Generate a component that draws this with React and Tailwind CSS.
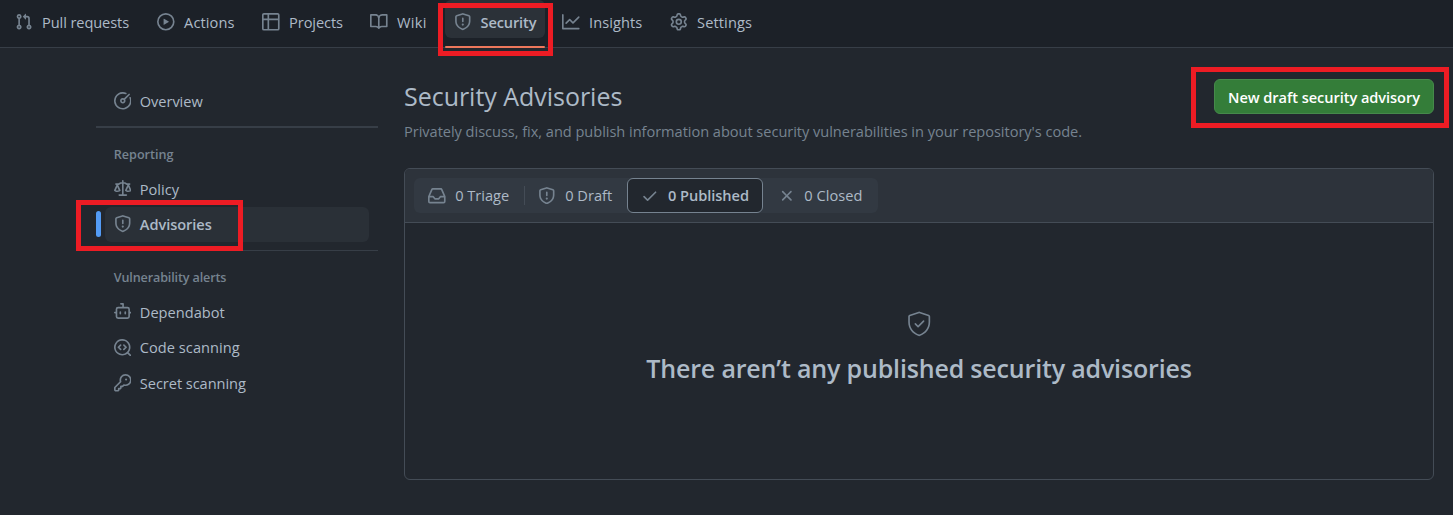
const ICONS = {
  pullRequest: "M1.5 3.25a2.25 2.25 0 1 1 3 2.122v5.256a2.251 2.251 0 1 1-1.5 0V5.372A2.25 2.25 0 0 1 1.5 3.25Zm5.677-.177L9.573.677A.25.25 0 0 1 10 .854V2.5h1A2.5 2.5 0 0 1 13.5 5v5.628a2.251 2.251 0 1 1-1.5 0V5a1 1 0 0 0-1-1h-1v1.646a.25.25 0 0 1-.427.177L7.177 3.427a.25.25 0 0 1 0-.354ZM3.75 2.5a.75.75 0 1 0 0 1.5.75.75 0 0 0 0-1.5Zm0 9.5a.75.75 0 1 0 0 1.5.75.75 0 0 0 0-1.5Zm8.25.75a.75.75 0 1 0 1.5 0 .75.75 0 0 0-1.5 0Z",
  play: "M8 0a8 8 0 1 1 0 16A8 8 0 0 1 8 0ZM1.5 8a6.5 6.5 0 1 0 13 0 6.5 6.5 0 0 0-13 0Zm4.879-2.773 4.264 2.559a.25.25 0 0 1 0 .428l-4.264 2.559A.25.25 0 0 1 6 10.559V5.442a.25.25 0 0 1 .379-.215Z",
  table: "M0 1.75C0 .784.784 0 1.75 0h12.5C15.216 0 16 .784 16 1.75v12.5A1.75 1.75 0 0 1 14.25 16H1.75A1.75 1.75 0 0 1 0 14.25ZM6.5 6.5v8h7.75a.25.25 0 0 0 .25-.25V6.5Zm8-1.5V1.75a.25.25 0 0 0-.25-.25H6.5V5Zm-13 1.5v7.75c0 .138.112.25.25.25H5v-8ZM5 5V1.5H1.75a.25.25 0 0 0-.25.25V5Z",
  book: "M0 1.75A.75.75 0 0 1 .75 1h4.253c1.227 0 2.317.59 3 1.501A3.743 3.743 0 0 1 11.006 1h4.245a.75.75 0 0 1 .75.75v10.5a.75.75 0 0 1-.75.75h-4.507a2.25 2.25 0 0 0-1.591.659l-.622.621a.75.75 0 0 1-1.06 0l-.622-.621A2.25 2.25 0 0 0 5.258 13H.75a.75.75 0 0 1-.75-.75Zm7.251 10.324.004-5.073-.002-2.253A2.25 2.25 0 0 0 5.003 2.5H1.5v9h3.757a3.75 3.75 0 0 1 1.994.574ZM8.755 4.75l-.004 7.322a3.752 3.752 0 0 1 1.992-.572H14.5v-9h-3.495a2.25 2.25 0 0 0-2.25 2.25Z",
  shield: "M7.467.133a1.748 1.748 0 0 1 1.066 0l5.25 1.68A1.75 1.75 0 0 1 15 3.48V7c0 1.566-.32 3.182-1.303 4.682-.983 1.498-2.585 2.813-5.032 3.855a1.697 1.697 0 0 1-1.33 0c-2.447-1.042-4.049-2.357-5.032-3.855C1.32 10.182 1 8.566 1 7V3.48a1.75 1.75 0 0 1 1.217-1.667Zm.61 1.429a.25.25 0 0 0-.153 0l-5.25 1.68a.25.25 0 0 0-.174.238V7c0 1.358.275 2.666 1.057 3.86.784 1.194 2.121 2.34 4.366 3.297a.196.196 0 0 0 .154 0c2.245-.956 3.582-2.104 4.366-3.298C13.225 9.666 13.5 8.36 13.5 7V3.48a.251.251 0 0 0-.174-.237l-5.25-1.68ZM8.75 4.75v3a.75.75 0 0 1-1.5 0v-3a.75.75 0 0 1 1.5 0ZM9 10.5a1 1 0 1 1-2 0 1 1 0 0 1 2 0Z",
  graph: "M1.5 1.75V13.5h13.75a.75.75 0 0 1 0 1.5H.75a.75.75 0 0 1-.75-.75V1.75a.75.75 0 0 1 1.5 0Zm14.28 2.53-5.25 5.25a.75.75 0 0 1-1.06 0L7 7.06 4.28 9.78a.751.751 0 0 1-1.042-.018.751.751 0 0 1-.018-1.042l3.25-3.25a.75.75 0 0 1 1.06 0L10 7.94l4.72-4.72a.751.751 0 0 1 1.042.018.751.751 0 0 1 .018 1.042Z",
  gear: "M8 0a8.2 8.2 0 0 1 .701.031C9.444.095 9.99.645 10.16 1.29l.288 1.107c.018.066.079.158.212.224.231.114.454.243.668.386.123.082.233.09.299.071l1.103-.303c.644-.176 1.392.021 1.82.63.27.385.506.792.704 1.218.315.675.111 1.422-.364 1.891l-.814.806c-.049.048-.098.147-.088.294.016.257.016.515 0 .772-.01.147.038.246.088.294l.814.806c.475.469.679 1.216.364 1.891a7.977 7.977 0 0 1-.704 1.217c-.428.61-1.176.807-1.82.63l-1.102-.302c-.067-.019-.177-.011-.3.071a5.909 5.909 0 0 1-.668.386c-.133.066-.194.158-.211.224l-.29 1.106c-.168.646-.715 1.196-1.458 1.26a8.006 8.006 0 0 1-1.402 0c-.743-.064-1.289-.614-1.458-1.26l-.289-1.106c-.018-.066-.079-.158-.212-.224a5.738 5.738 0 0 1-.668-.386c-.123-.082-.233-.09-.299-.071l-1.103.303c-.644.176-1.392-.021-1.82-.63a8.12 8.12 0 0 1-.704-1.218c-.315-.675-.111-1.422.363-1.891l.815-.806c.05-.048.098-.147.088-.294a6.214 6.214 0 0 1 0-.772c.01-.147-.038-.246-.088-.294l-.815-.806C.635 6.045.431 5.298.746 4.623a7.92 7.92 0 0 1 .704-1.217c.428-.61 1.176-.807 1.82-.63l1.102.302c.067.019.177.011.3-.071.214-.143.437-.272.668-.386.133-.066.194-.158.211-.224l.29-1.106C6.009.645 6.556.095 7.299.03 7.53.01 7.764 0 8 0Zm-.571 1.525c-.036.003-.108.036-.137.146l-.289 1.105c-.147.561-.549.967-.998 1.189-.173.086-.34.183-.5.29-.417.278-.97.423-1.529.27l-1.103-.303c-.109-.03-.175.016-.195.045-.22.312-.412.644-.573.99-.014.031-.021.11.059.19l.815.806c.411.406.562.957.53 1.456a4.709 4.709 0 0 0 0 .582c.032.499-.119 1.05-.53 1.456l-.815.806c-.081.08-.073.159-.059.19.162.346.353.677.573.989.02.03.085.076.195.046l1.102-.303c.56-.153 1.113-.008 1.53.27.161.107.328.204.501.29.447.222.85.629.997 1.189l.289 1.105c.029.109.101.143.137.146a6.6 6.6 0 0 0 1.142 0c.036-.003.108-.036.137-.146l.289-1.105c.147-.561.549-.967.998-1.189.173-.086.34-.183.5-.29.417-.278.97-.423 1.529-.27l1.103.303c.109.029.175-.016.195-.045.22-.313.411-.644.573-.99.014-.031.021-.11-.059-.19l-.815-.806c-.411-.406-.562-.957-.53-1.456a4.709 4.709 0 0 0 0-.582c-.032-.499.119-1.05.53-1.456l.815-.806c.081-.08.073-.159.059-.19a6.464 6.464 0 0 0-.573-.989c-.02-.03-.085-.076-.195-.046l-1.102.303c-.56.153-1.113.008-1.53-.27a4.44 4.44 0 0 0-.501-.29c-.447-.222-.85-.629-.997-1.189l-.289-1.105c-.029-.11-.101-.143-.137-.146a6.6 6.6 0 0 0-1.142 0ZM11 8a3 3 0 1 1-6 0 3 3 0 0 1 6 0ZM9.5 8a1.5 1.5 0 1 0-3.001.001A1.5 1.5 0 0 0 9.5 8Z",
  meter: "M8 1.5a6.5 6.5 0 1 0 6.016 4.035.75.75 0 0 1 1.388-.57 8 8 0 1 1-4.37-4.37.75.75 0 0 1-.569 1.389A6.473 6.473 0 0 0 8 1.5Zm6.28.22a.75.75 0 0 1 0 1.06l-4.063 4.064a2.5 2.5 0 1 1-1.06-1.06L13.22 1.72a.75.75 0 0 1 1.06 0ZM7 8a1 1 0 1 0 2 0 1 1 0 0 0-2 0Z",
  law: "M8.75.75V2h.985c.304 0 .603.08.867.231l1.29.736c.038.022.08.033.124.033h2.234a.75.75 0 0 1 0 1.5h-.427l2.111 4.692a.75.75 0 0 1-.154.838l-.53-.53.529.531-.001.002-.002.002-.006.006-.006.005-.01.01-.045.04c-.21.176-.441.327-.686.45C14.556 10.78 13.88 11 13 11a4.498 4.498 0 0 1-2.023-.454 3.544 3.544 0 0 1-.686-.45l-.045-.04-.016-.015-.006-.006-.004-.004v-.001a.75.75 0 0 1-.154-.838L12.178 4.5h-.162c-.305 0-.604-.079-.868-.231l-1.29-.736a.245.245 0 0 0-.124-.033H8.75V13h2.5a.75.75 0 0 1 0 1.5h-6.5a.75.75 0 0 1 0-1.5h2.5V3.5h-.984a.245.245 0 0 0-.124.033l-1.289.737c-.265.15-.564.23-.869.23h-.162l2.112 4.692a.75.75 0 0 1-.154.838l-.53-.53.529.531-.001.002-.002.002-.006.006-.016.015-.045.04c-.21.176-.441.327-.686.45C4.556 10.78 3.88 11 3 11a4.498 4.498 0 0 1-2.023-.454 3.544 3.544 0 0 1-.686-.45l-.045-.04-.016-.015-.006-.006-.004-.004v-.001a.75.75 0 0 1-.154-.838L2.178 4.5H1.75a.75.75 0 0 1 0-1.5h2.234a.249.249 0 0 0 .125-.033l1.288-.737c.265-.15.564-.23.869-.23h.984V.75a.75.75 0 0 1 1.5 0Zm2.945 8.477c.285.135.718.273 1.305.273s1.02-.138 1.305-.273L13 6.327Zm-10 0c.285.135.718.273 1.305.273s1.02-.138 1.305-.273L3 6.327Z",
  dependabot: "M5.75 7.5a.75.75 0 0 1 .75.75v1.5a.75.75 0 0 1-1.5 0v-1.5a.75.75 0 0 1 .75-.75Zm5.25.75a.75.75 0 0 0-1.5 0v1.5a.75.75 0 0 0 1.5 0v-1.5ZM6.25 0h2A.75.75 0 0 1 9 .75V3.5h3.25a2.25 2.25 0 0 1 2.25 2.25V8h.75a.75.75 0 0 1 0 1.5h-.75v2.75a2.25 2.25 0 0 1-2.25 2.25h-8.5a2.25 2.25 0 0 1-2.25-2.25V9.5H.75a.75.75 0 0 1 0-1.5h.75V5.75A2.25 2.25 0 0 1 3.75 3.5H7.5v-2H6.25a.75.75 0 0 1 0-1.5ZM3 5.75v6.5c0 .414.336.75.75.75h8.5a.75.75 0 0 0 .75-.75v-6.5a.75.75 0 0 0-.75-.75h-8.5a.75.75 0 0 0-.75.75Z",
  codescan: "M8.47 4.97a.75.75 0 0 0 0 1.06L9.94 7.5 8.47 8.97a.75.75 0 1 0 1.06 1.06l2-2a.75.75 0 0 0 0-1.06l-2-2a.75.75 0 0 0-1.06 0ZM6.53 6.03a.75.75 0 0 0-1.06-1.06l-2 2a.75.75 0 0 0 0 1.06l2 2a.75.75 0 1 0 1.06-1.06L5.06 7.5l1.47-1.47ZM12.246 13.307a7.501 7.501 0 1 1 1.06-1.06l2.474 2.473a.749.749 0 0 1-.326 1.275.749.749 0 0 1-.734-.215ZM1.5 7.5a6.002 6.002 0 0 0 3.608 5.504 6.002 6.002 0 0 0 6.486-1.117.748.748 0 0 1 .292-.293A6 6 0 1 0 1.5 7.5Z",
  key: "M6.5 5.5a4 4 0 1 1 2.731 3.795.75.75 0 0 0-.768.18L7.44 10.5H6.25a.75.75 0 0 0-.75.75v1.19l-.06.06H4.25a.75.75 0 0 0-.75.75v1.19l-.06.06H1.75a.25.25 0 0 1-.25-.25v-1.69l5.024-5.023a.75.75 0 0 0 .181-.768A3.995 3.995 0 0 1 6.5 5.5Zm4-5.5a5.5 5.5 0 0 0-5.348 6.788L.22 11.72a.75.75 0 0 0-.22.53v2C0 15.216.784 16 1.75 16h2a.75.75 0 0 0 .53-.22l.5-.5a.75.75 0 0 0 .22-.53V14h.75a.75.75 0 0 0 .53-.22l.5-.5a.75.75 0 0 0 .22-.53V12h.75a.75.75 0 0 0 .53-.22l.932-.932A5.5 5.5 0 1 0 10.5 0Zm.5 6a1 1 0 1 0 0-2 1 1 0 0 0 0 2Z",
  inbox: "M2.8 2.06A1.75 1.75 0 0 1 4.41 1h7.18c.7 0 1.333.417 1.61 1.06l2.74 6.395c.04.093.06.194.06.295v4.5A1.75 1.75 0 0 1 14.25 15H1.75A1.75 1.75 0 0 1 0 13.25v-4.5c0-.101.02-.202.06-.295Zm1.61.44a.25.25 0 0 0-.23.152L1.887 8H4.75a.75.75 0 0 1 .6.3L6.625 10h2.75l1.275-1.7a.75.75 0 0 1 .6-.3h2.863L11.82 2.652a.25.25 0 0 0-.23-.152Zm10.09 7h-2.875l-1.275 1.7a.75.75 0 0 1-.6.3h-3.5a.75.75 0 0 1-.6-.3L4.375 9.5H1.5v3.75c0 .138.112.25.25.25h12.5a.25.25 0 0 0 .25-.25Z",
  check: "M13.78 4.22a.75.75 0 0 1 0 1.06l-7.25 7.25a.75.75 0 0 1-1.06 0L2.22 9.28a.751.751 0 0 1 .018-1.042.751.751 0 0 1 1.042-.018L6 10.94l6.72-6.72a.75.75 0 0 1 1.06 0Z",
  x: "M3.72 3.72a.75.75 0 0 1 1.06 0L8 6.94l3.22-3.22a.749.749 0 0 1 1.275.326.749.749 0 0 1-.215.734L9.06 8l3.22 3.22a.749.749 0 0 1-.326 1.275.749.749 0 0 1-.734-.215L8 9.06l-3.22 3.22a.751.751 0 0 1-1.042-.018.751.751 0 0 1-.018-1.042L6.94 8 3.72 4.78a.75.75 0 0 1 0-1.06Z",
};

function Icon({ name }) {
  return (
    <svg viewBox="0 0 16 16" fill="currentColor" className="size-[17.6px] shrink-0 text-[#768390]">
      <path d={ICONS[name]} />
    </svg>
  );
}

const TABS = [
  { icon: "pullRequest", label: "Pull requests", width: "w-[142px]", track: "pl-[0.5px] tracking-[-0.1px]" },
  { icon: "play", label: "Actions", width: "w-[105px]", track: "pl-[0.5px] tracking-[0.1px]" },
  { icon: "table", label: "Projects", width: "w-[108px]", track: "pl-[0.5px] tracking-[-0.1px]" },
  { icon: "book", label: "Wiki", width: "w-[84px]", track: "pl-[0.5px] tracking-[0.3px]" },
  { icon: "shield", label: "Security", width: "w-[108px]", track: "tracking-[-0.15px]", current: true },
  { icon: "graph", label: "Insights", width: "w-[108px]", track: "pl-[0.5px] tracking-[0.05px]" },
  { icon: "gear", label: "Settings", width: "w-[110px]", track: "pl-[0.5px] tracking-[0.1px]" },
];

function Tab({ tab }) {
  return (
    <a className={`flex h-12 items-start ${tab.width}`}>
      <span className={`flex h-full flex-col justify-between ${tab.current ? "w-[100px]" : ""}`}>
        <span
          className={`flex h-[38px] items-center gap-[9px] rounded-md pl-[9px] pt-[6px] ${
            tab.current ? "bg-[#2b3138] font-semibold" : ""
          }`}
        >
          <Icon name={tab.icon} />
          <span className={`whitespace-nowrap leading-5 ${tab.track}`}>{tab.label}</span>
        </span>
        {tab.current && <span className="h-[2px] rounded-sm bg-[#ec775c]" />}
      </span>
    </a>
  );
}

function SideItem({ icon, label, track, current = false }) {
  return (
    <li className="flex h-[35px] items-center">
      <span className={`mb-px h-[26px] w-[5px] rounded-md ${current ? "bg-[#539bf5]" : ""}`} />
      <a
        className={`ml-1 flex h-full w-[264px] items-center gap-[8.6px] rounded-md pb-px pl-[8.6px] ${
          current ? "bg-[#2a3037] font-semibold" : ""
        }`}
      >
        <Icon name={icon} />
        <span className={`leading-5 ${track}`}>{label}</span>
      </a>
    </li>
  );
}

function SideHeading({ children, track }) {
  return <h3 className={`pl-[17.8px] text-[12.6px] font-semibold leading-[18px] text-[#768390] ${track}`}>{children}</h3>;
}

function Segment({ icon, label, track, className }) {
  return (
    <button className={`flex h-full items-center ${className}`}>
      <Icon name={icon} />
      <span className={`whitespace-nowrap pb-[1.5px] leading-5 ${track}`}>{label}</span>
    </button>
  );
}

export default function App() {
  return (
    <div className="relative flex h-[515px] w-[1453px] flex-col overflow-hidden bg-[#22272e] font-['Open_Sans','Noto_Sans',sans-serif] text-[14.6px] text-[#adbac7]">
      <header className="flex h-12 shrink-0 border-b border-[#373e47] bg-[#1c2128] pl-[6px]">
        {TABS.map((tab) => (
          <Tab key={tab.label} tab={tab} />
        ))}
      </header>

      <div className="flex flex-1 pl-24 pr-[19px]">
        <nav className="w-[282px] shrink-0 pt-9">
          <ul>
            <SideItem icon="meter" label="Overview" track="tracking-[-0.05px]" />
          </ul>
          <hr className="mt-[7px] border-t-2 border-[#373e47]" />
          <div className="mt-[18px]">
            <SideHeading track="tracking-[0px]">Reporting</SideHeading>
          </div>
          <ul className="mt-2">
            <SideItem icon="law" label="Policy" track="tracking-[0px]" />
            <SideItem icon="shield" label="Advisories" track="tracking-[-0.05px]" current />
          </ul>
          <hr className="mt-2 border-[#373e47]" />
          <div className="mt-[18px]">
            <SideHeading track="tracking-[-0.14px]">Vulnerability alerts</SideHeading>
          </div>
          <ul className="mt-2 space-y-[0.4px]">
            <SideItem icon="dependabot" label="Dependabot" track="tracking-[0.02px]" />
            <SideItem icon="codescan" label="Code scanning" track="tracking-[0.04px]" />
            <SideItem icon="key" label="Secret scanning" track="tracking-[-0.05px]" />
          </ul>
        </nav>

        <main className="ml-[26px] flex-1">
          <div className="flex items-start justify-between pt-[31px]">
            <div className="-mt-px">
              <h1 className="text-[25px] leading-9 tracking-[-0.03px]">Security Advisories</h1>
              <p className="mt-[7px] whitespace-nowrap leading-5 tracking-[-0.04px] text-[#768390]">
                Privately discuss, fix, and publish information about security vulnerabilities in your repository&apos;s
                code.
              </p>
            </div>
            <button className="h-[35px] w-[220px] whitespace-nowrap rounded-md border border-[#46894b] bg-[#347d39] pt-px font-semibold leading-5 tracking-[-0.06px] text-white">
              New draft security advisory
            </button>
          </div>

          <section className="mt-[27px] flex h-[312px] flex-col rounded-md border border-[#444c56]">
            <div className="flex h-[54px] shrink-0 items-center rounded-t-[5px] border-b border-[#444c56] bg-[#2d333b] pl-[9px]">
              <div className="flex h-[35px] w-[464px] items-center rounded-md bg-[#323942]">
                <Segment icon="inbox" label="0 Triage" track="tracking-[0px]" className="w-[110px] gap-[9.6px] pl-[14px]" />
                <span className="h-[19px] w-px bg-[#444c56]" />
                <Segment icon="shield" label="0 Draft" track="tracking-[0px]" className="w-[102px] gap-[9.6px] pl-[13px]" />
                <Segment
                  icon="check"
                  label="0 Published"
                  track="tracking-[-0.04px]"
                  className="w-[136px] gap-[9.4px] rounded-md border border-[#768390] bg-[#22272e] pl-[13px] font-semibold"
                />
                <Segment icon="x" label="0 Closed" track="tracking-[0.05px]" className="gap-[9.2px] pl-[14.5px]" />
              </div>
            </div>
            <div className="flex flex-col items-center pt-[88px]">
              <svg viewBox="0 0 24 24" fill="currentColor" className="size-[26.4px] text-[#768390]">
                <path d="M16.53 9.78a.75.75 0 0 0-1.06-1.06L11 13.19l-1.97-1.97a.75.75 0 0 0-1.06 1.06l2.5 2.5a.75.75 0 0 0 1.06 0l5-5Z" />
                <path d="m12.54.637 8.25 2.675A1.75 1.75 0 0 1 22 4.976V10c0 6.19-3.771 10.704-9.401 12.83a1.704 1.704 0 0 1-1.198 0C5.77 20.705 2 16.19 2 10V4.976c0-.758.489-1.43 1.21-1.664L11.46.637a1.748 1.748 0 0 1 1.08 0Zm-.617 1.426-8.25 2.676a.249.249 0 0 0-.173.237V10c0 5.46 3.28 9.483 8.43 11.426a.199.199 0 0 0 .14 0C17.22 19.483 20.5 15.461 20.5 10V4.976a.25.25 0 0 0-.173-.237l-8.25-2.676a.253.253 0 0 0-.154 0Z" />
              </svg>
              <h2 className="mt-[10.5px] text-[25px] font-semibold leading-10 tracking-[-0.17px]">
                There aren’t any published security advisories
              </h2>
            </div>
          </section>
        </main>
      </div>

      <div className="pointer-events-none absolute left-[438px] top-[3px] h-[53px] w-[115px] border-[5px] border-[#ed1c24]" />
      <div className="pointer-events-none absolute left-[76px] top-[200px] h-[51px] w-[167px] border-[5px] border-[#ed1c24]" />
      <div className="pointer-events-none absolute left-[1191px] top-[67px] h-[61px] w-[258px] border-[5px] border-[#ed1c24]" />
    </div>
  );
}
